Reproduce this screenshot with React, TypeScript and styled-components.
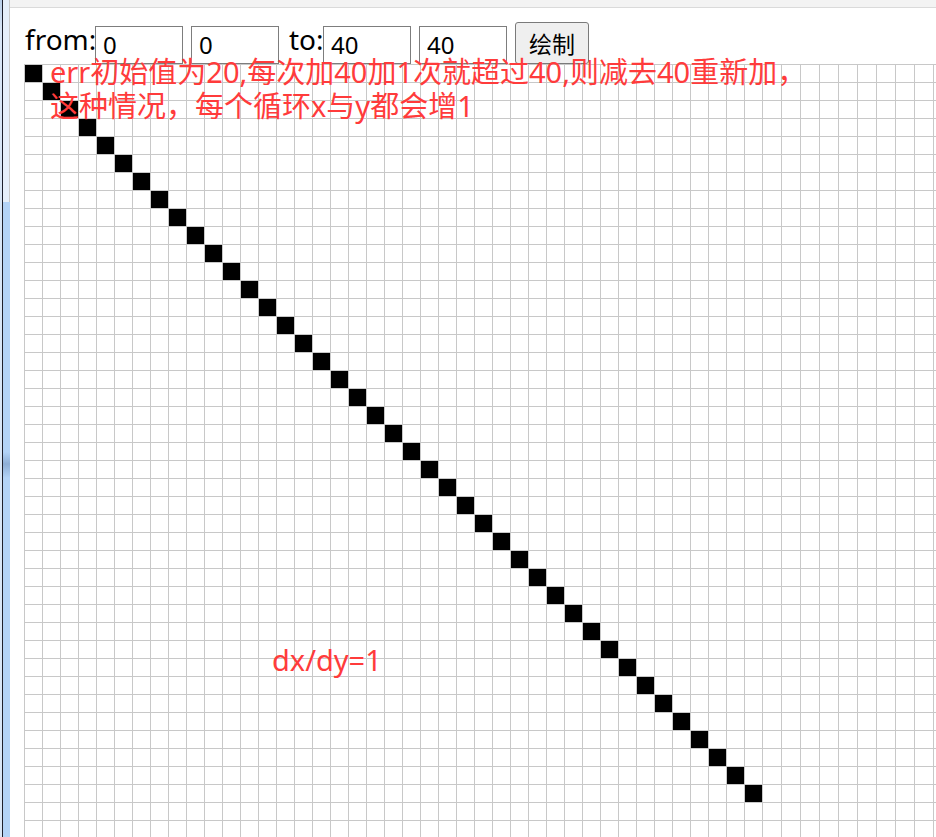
import React from "react";
import styled, { createGlobalStyle } from "styled-components";

const GlobalStyle = createGlobalStyle`
  html, body { margin: 0; padding: 0; background: #ffffff; overflow: hidden; }
  body { font-family: "Noto Sans", "Noto Sans CJK SC", sans-serif; }
`;

const Page = styled.div`
  display: flex;
  width: 936px;
  height: 837px;
  overflow: hidden;
`;

const SideFrame = styled.div`
  display: flex;
  width: 10px;
  flex: none;
`;

const EdgeStrip = styled.div`
  width: 2px;
  background: linear-gradient(to bottom, #b9cfea 0, #d9e6f6 30px, #d9e6f6 100%);
`;

const DarkLine = styled.div`
  width: 1px;
  background: #1e1f2b;
`;

const BlueColumn = styled.div`
  width: 7px;
  display: flex;
  flex-direction: column;
`;

const BlueSegment = styled.div<{ $h?: number; $light?: boolean }>`
  flex: ${(p) => (p.$h ? `0 0 ${p.$h}px` : "1")};
  background: ${(p) =>
    p.$light
      ? "linear-gradient(to right, #e6effa 0, #e6effa 6px, #c9c9c9 6px)"
      : "linear-gradient(to bottom, #b3d3f7 0, #b3d3f7 250px, #8eaed6 262px, #b3d3f7 276px, #b3d3f7 100%)"};
`;

const Main = styled.div`
  flex: 1;
  display: flex;
  flex-direction: column;
  min-width: 0;
`;

const TopBar = styled.div`
  height: 7px;
  background: #f3f3f3;
  border-bottom: 1px solid #dadada;
`;

const Toolbar = styled.div`
  height: 56px;
  display: flex;
  align-items: flex-end;
  padding-left: 15px;
`;

const Label = styled.span<{ $w: number }>`
  width: ${(p) => p.$w}px;
  flex: none;
  font-family: "Noto Sans", sans-serif;
  font-size: 28px;
  line-height: 30px;
  padding-bottom: 10px;
  color: #000;
  white-space: nowrap;
`;

const NumInput = styled.input<{ $gap?: number }>`
  box-sizing: border-box;
  width: 88px;
  height: 38px;
  margin: 0 ${(p) => p.$gap ?? 0}px 0 0;
  padding: 0 7px 2px;
  border: 1px solid #7d7d7d;
  border-radius: 0;
  background: #fff;
  font-family: "Noto Sans", sans-serif;
  font-size: 24px;
  color: #000;
  outline: none;
  flex: none;
`;

const DrawButton = styled.button`
  box-sizing: border-box;
  width: 74px;
  height: 42px;
  padding: 0;
  border: 1px solid #7a7a7a;
  border-radius: 3px;
  background: #efefef;
  font-family: "Noto Sans CJK SC", sans-serif;
  font-size: 23px;
  color: #000;
  flex: none;
`;

const CanvasWrap = styled.div`
  position: relative;
  margin-left: 14px;
  width: 912px;
  height: 773px;
`;

const Note = styled.div<{ $x: number; $y: number }>`
  position: absolute;
  left: ${(p) => p.$x}px;
  top: ${(p) => p.$y}px;
  font-family: "Noto Sans", "Noto Sans CJK SC", sans-serif;
  font-size: 29px;
  line-height: 34px;
  color: #ff3b3b;
  white-space: nowrap;
`;

const W = 912;
const H = 773;

function GridCanvas() {
  const xs: number[] = [];
  for (let k = 0; k <= 41; k++) xs.push(18 * k);
  for (let j = 1; 738 + 19 * j < W; j++) xs.push(738 + 19 * j);
  const ys: number[] = [];
  for (let k = 0; 18 * k < H; k++) ys.push(18 * k);
  const cells = Array.from({ length: 41 }, (_, i) => i);
  return (
    <svg width={W} height={H} style={{ display: "block" }}>
      <rect x={0} y={0} width={W} height={H} fill="#fff" />
      {xs.map((x) => (
        <line key={"v" + x} x1={x + 0.5} y1={0} x2={x + 0.5} y2={H} stroke="#c8c8c8" strokeWidth={1} />
      ))}
      {ys.map((y) => (
        <line key={"h" + y} x1={0} y1={y + 0.5} x2={W} y2={y + 0.5} stroke="#c8c8c8" strokeWidth={1} />
      ))}
      {cells.map((i) => (
        <rect key={"c" + i} x={1 + 18 * i} y={1 + 18 * i} width={17} height={17} fill="#000" />
      ))}
    </svg>
  );
}

export default function App() {
  return (
    <>
      <GlobalStyle />
      <Page>
        <SideFrame>
          <EdgeStrip />
          <DarkLine />
          <BlueColumn>
            <BlueSegment $h={202} $light />
            <BlueSegment />
          </BlueColumn>
        </SideFrame>
        <Main>
          <TopBar />
          <Toolbar>
            <Label $w={70}>from:</Label>
            <NumInput defaultValue="0" $gap={8} />
            <NumInput defaultValue="0" $gap={10} />
            <Label $w={34}>to:</Label>
            <NumInput defaultValue="40" $gap={8} />
            <NumInput defaultValue="40" $gap={8} />
            <DrawButton>绘制</DrawButton>
          </Toolbar>
          <CanvasWrap>
            <GridCanvas />
            <Note $x={26} $y={-9}>
              err初始值为20,每次加40加1次就超过40,则减去40重新加，
              <br />
              这种情况，每个循环x与y都会增1
            </Note>
            <Note $x={248} $y={579}>dx/dy=1</Note>
          </CanvasWrap>
        </Main>
      </Page>
    </>
  );
}
